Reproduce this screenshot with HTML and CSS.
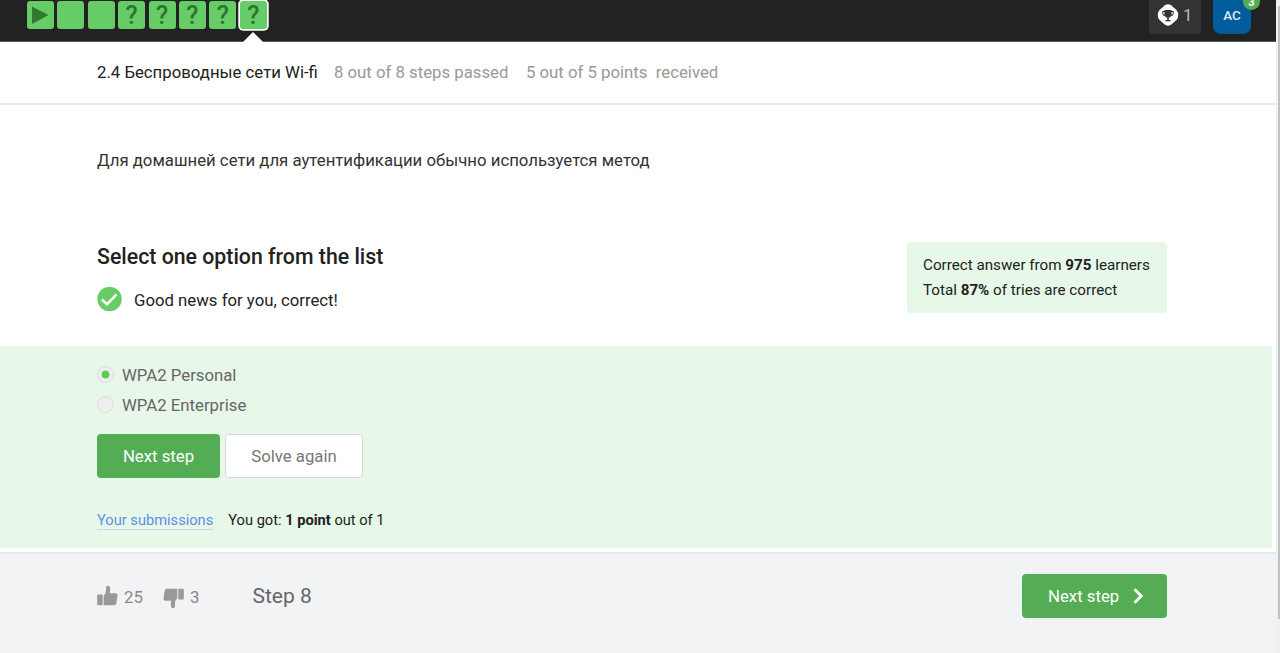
FILE: index.html
```html
<!DOCTYPE html>
<html lang="en">
<head>
<meta charset="utf-8">
<title>2.4 Беспроводные сети Wi-fi</title>
<link rel="stylesheet" href="styles.css">
</head>
<body>
<div class="page">
  <header class="topbar">
    <nav class="steps">
      <a class="step"><svg class="play" viewBox="0 0 27 28"><path d="M5 5.500 21.500 14 5 23z"/></svg></a>
      <a class="step"></a>
      <a class="step"></a>
      <a class="step">?</a>
      <a class="step">?</a>
      <a class="step">?</a>
      <a class="step">?</a>
      <a class="step active">?</a>
    </nav>
    <div class="user">
      <div class="score">
        <svg class="trophy" viewBox="0 0 22 22"><path fill="#fff" d="M8 1.200Q11-.6 14 1.200L19.500 6Q23 11 19.500 16L14 20.800Q11 22.600 8 20.800L2.500 16Q-1 11 2.500 6z"/><path fill="#333" d="M7.500 6h7v1h2.200v2.500q0 2-2.700 2.700-.8 1.300-2.200 1.600V16h1.700v1.200h-5V16h1.700v-2.200q-1.400-.3-2.200-1.600-2.700-.7-2.700-2.700V7h2.200zM6.300 8v1.500q0 .8 1.200 1.300V8zm8.200 0v2.800q1.200-.5 1.200-1.300V8z"/></svg>
        <span>1</span>
      </div>
      <div class="avatar">AC<span class="badge">3</span></div>
    </div>
  </header>
  <div class="lesson">
    <span class="title">2.4 Беспроводные сети Wi-fi</span>
    <span class="passed">8 out of 8 steps passed</span>
    <span class="points">5 out of 5 points&nbsp; received</span>
  </div>
  <main>
    <p class="question">Для домашней сети для аутентификации обычно используется метод</p>
    <section class="quiz">
      <div>
        <h2>Select one option from the list</h2>
        <div class="result">
          <svg class="check" viewBox="0 0 26 26"><circle cx="13" cy="13" r="12.700" fill="#66cc66"/><path d="M5 13.500 10.400 18.500 20.300 8.200" fill="none" stroke="#fff" stroke-width="2.600"/></svg>
          <span>Good news for you, correct!</span>
        </div>
      </div>
      <div class="stats">
        <div>Correct answer from <b>975</b> learners</div>
        <div>Total <b>87%</b> of tries are correct</div>
      </div>
    </section>
    <section class="attempt">
      <div class="option"><i class="radio on"></i><span>WPA2 Personal</span></div>
      <div class="option"><i class="radio"></i><span>WPA2 Enterprise</span></div>
      <div class="buttons"><button class="btn primary">Next step</button><button class="btn plain">Solve again</button></div>
      <div class="submissions"><a class="link">Your submissions</a><span class="got">You got: <b>1 point</b> out of 1</span></div>
    </section>
  </main>
  <footer class="footer">
    <svg class="thumb" viewBox="0 0 22 22"><path d="M1 9.300h4.200q.8 0 .8.800v9.600q0 .9-.8.900H1q-.8 0-.8-.9v-9.600q0-.8.800-.8zM7 11Q9.500 8.500 9.500 5V1.800Q9.600.3 11.300.3q2.500 0 2.500 3.400 0 2.300-.7 4.500h6.700q1.900.2 1.700 2.300l-1.300 8.300q-.4 1.800-2.200 1.800H7z"/></svg>
    <span class="count up">25</span>
    <svg class="thumb down" viewBox="0 0 22 22"><path d="M1 9.300h4.200q.8 0 .8.800v9.600q0 .9-.8.900H1q-.8 0-.8-.9v-9.600q0-.8.800-.8zM7 11Q9.500 8.500 9.500 5V1.800Q9.600.3 11.300.3q2.500 0 2.500 3.400 0 2.300-.7 4.500h6.700q1.900.2 1.700 2.300l-1.300 8.300q-.4 1.800-2.200 1.800H7z"/></svg>
    <span class="count">3</span>
    <span class="step-name">Step 8</span>
    <button class="btn primary next">Next step<svg class="chevron" viewBox="0 0 10 16"><path d="M1.500 1.300 8.200 8 1.500 14.700" fill="none" stroke="#fff" stroke-width="2.800"/></svg></button>
  </footer>
</div>
<div class="scroll"><div class="scroll-thumb"></div></div>
</body>
</html>
```
FILE: styles.css
```css
* { box-sizing: border-box; }
body {
  margin: 0;
  display: flex;
  height: 653px;
  overflow: hidden;
  background: #fff;
  color: #222;
  font-family: Roboto, "Liberation Sans", sans-serif;
  font-size: 16.750px;
  line-height: 24px;
}
.page { flex: 1; display: flex; flex-direction: column; }
.topbar {
  height: 42px;
  flex: none;
  background: #222;
  border-bottom: 1px solid #555;
  display: flex;
  justify-content: space-between;
  padding: 0 25px 0 27px;
}
.steps { display: flex; gap: 3.400px; padding-top: 1px; }
.step {
  position: relative;
  width: 27px;
  height: 28px;
  border-radius: 3px;
  background: #66cc66;
  color: #2f7431;
  font-size: 25px;
  font-weight: 500;
  line-height: 29px;
  text-align: center;
}
.play { display: block; width: 27px; height: 28px; fill: #33782f; }
.active { box-shadow: 0 0 0 1.700px #fff; }
.active::after {
  content: "";
  position: absolute;
  left: 3px;
  top: 31px;
  border: 10.500px solid transparent;
  border-top: 0;
  border-bottom: 10px solid #fff;
}
.user { display: flex; gap: 12px; }
.score {
  width: 52px;
  height: 34px;
  background: #333;
  border-radius: 0 0 4px 4px;
  display: flex;
  align-items: center;
  gap: 4px;
  padding: 0 0 4px 8px;
  color: #bbb;
}
.trophy { width: 22px; height: 22px; }
.avatar {
  position: relative;
  width: 38px;
  height: 34px;
  border-radius: 0 0 8px 8px;
  background: #005c9c;
  color: #dcebf5;
  font-size: 13.500px;
  font-weight: 500;
  line-height: 31px;
  text-align: center;
}
.badge {
  position: absolute;
  right: -9px;
  top: -7px;
  width: 17px;
  height: 17px;
  border-radius: 50%;
  background: #54ad54;
  color: #fff;
  font-size: 11px;
  font-weight: 700;
  line-height: 19px;
}
.lesson {
  height: 63px;
  flex: none;
  border-bottom: 2px solid #ebebeb;
  padding: 18px 0 0 97px;
  display: flex;
  color: #999;
}
.title { width: 237px; color: #222; white-space: nowrap; }
.passed { width: 192px; white-space: nowrap; }
.question { margin: 43px 0 0 97px; color: #333; }
.quiz {
  display: flex;
  justify-content: space-between;
  height: 175px;
  padding: 70px 109px 0 97px;
}
h2 { margin: 3px 0 0; font-size: 21.300px; line-height: 24px; font-weight: 500; color: #222; }
.result { display: flex; align-items: center; gap: 12px; margin-top: 17px; }
.result span { padding-top: 1px; }
.check { width: 25px; height: 26px; }
.stats {
  width: 260px;
  height: 71px;
  border-radius: 4px;
  background: #e7f7e8;
  padding: 11px 16px;
  font-size: 15.200px;
  line-height: 25px;
  white-space: nowrap;
}
.attempt {
  height: 202px;
  margin: -1px 4px 0 0;
  padding: 14px 0 0 97px;
  background: #e7f7e8;
}
.option { display: flex; align-items: center; height: 30px; gap: 8px; color: #666; }
.radio { width: 17px; height: 17px; margin-top: -2px; border: 1.500px solid #ddd; border-radius: 50%; background: #eee; }
.on { background: radial-gradient(circle, #5bc95b 3.700px, #eee 4.300px); }
.buttons { display: flex; gap: 5px; margin-top: 14px; }
.btn {
  height: 44px;
  border: 0;
  border-radius: 4px;
  padding: 0;
  font: 16.750px/24px Roboto, sans-serif;
}
.primary { width: 123px; background: #54ad54; color: #fff; }
.plain { width: 138px; background: #fff; border: 1px solid #d5dbd5; color: #777; }
.submissions { display: flex; gap: 15px; margin-top: 33px; font-size: 14.650px; line-height: 19px; white-space: nowrap; }
.link { color: #5c8fea; border-bottom: 1px solid #c4d8f0; height: 19px; }
.footer {
  height: 102px;
  flex: none;
  margin-top: 4px;
  padding: 20px 109px 0 97px;
  border-top: 2px solid #e9eaec;
  background: #f2f3f5;
  display: flex;
  align-items: flex-start;
  color: #888;
}
.thumb { width: 21px; height: 22px; margin-top: 11px; fill: #999; }
.down { transform: rotate(180deg); margin-top: 13px; }
.count { margin: 11px 0 0 6px; }
.up { width: 39px; }
.step-name { margin: 10px 0 0 53px; font-size: 21px; color: #666; }
.next { width: 145px; margin-left: auto; display: flex; align-items: center; justify-content: flex-start; gap: 14px; padding-left: 26px; }
.chevron { width: 10px; height: 16px; }
.scroll { width: 4px; background: #f1f1f1; padding-top: 6px; }
.scroll-thumb { height: 613px; margin-left: 2px; background: #c1c1c1; }
```
